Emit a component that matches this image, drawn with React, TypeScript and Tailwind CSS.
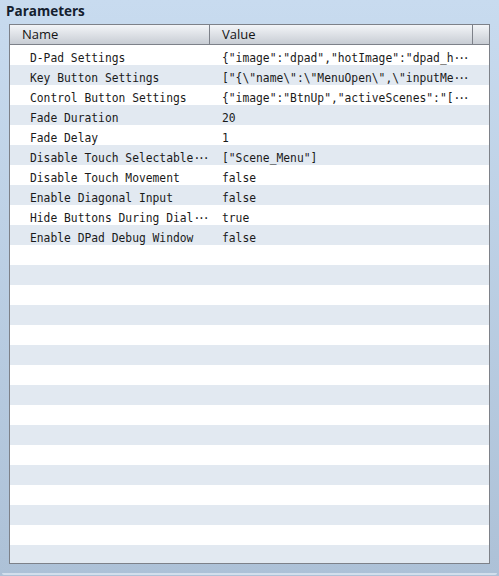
import React from "react";

type Param = { name: string; value: string; cut?: boolean; cutValue?: boolean };

const params: Param[] = [
  { name: "D-Pad Settings", value: '{"image":"dpad","hotImage":"dpad_h', cutValue: true },
  { name: "Key Button Settings", value: '["{\\"name\\":\\"MenuOpen\\",\\"inputMe', cutValue: true },
  { name: "Control Button Settings", value: '{"image":"BtnUp","activeScenes":"[', cutValue: true },
  { name: "Fade Duration", value: "20" },
  { name: "Fade Delay", value: "1" },
  { name: "Disable Touch Selectable", value: '["Scene_Menu"]', cut: true },
  { name: "Disable Touch Movement", value: "false" },
  { name: "Enable Diagonal Input", value: "false" },
  { name: "Hide Buttons During Dial", value: "true", cut: true },
  { name: "Enable DPad Debug Window", value: "false" },
];

const TOTAL_ROWS = 26;

// narrow monospace look: DejaVu Sans Mono squeezed horizontally
const Mono = ({ text, cut }: { text: string; cut?: boolean }) => (
  <span className="inline-block origin-left scale-x-[0.87] font-['DejaVu_Sans_Mono',monospace] text-[13px]">
    {text}
    {cut && <span className="tracking-[-2.5px]">···</span>}
  </span>
);

const App = () => {
  const rows = Array.from({ length: TOTAL_ROWS }, (_, i) => params[i] ?? null);

  return (
    <div className="w-[499px] h-[576px] bg-gradient-to-b from-[#c8dbef] to-[#adc1d7] flex flex-col overflow-hidden">
      <div className="h-[24px] pl-[6px] pt-[3px] font-['Open_Sans',sans-serif] font-bold text-[13.5px] leading-[16px] text-[#14202e]">
        Parameters
      </div>

      <div className="ml-[9px] w-[481px] h-[540px] border border-[#7d8189] bg-white overflow-hidden flex flex-col">
        {/* header */}
        <div className="flex h-[20px] shrink-0 border-b border-[#7d8189] bg-gradient-to-b from-[#f3f5f8] to-[#c8cdd4] font-['Open_Sans',sans-serif] text-[13px] leading-[19px] text-[#141414]">
          <div className="w-[200px] border-r border-[#7d8189] pl-[12px]">Name</div>
          <div className="w-[263px] border-r border-[#7d8189] pl-[12px]">Value</div>
          <div className="flex-1" />
        </div>

        {/* rows */}
        <div className="flex flex-col">
          {rows.map((p, i) => (
            <div
              key={i}
              className={`flex h-[20px] shrink-0 pt-[1px] leading-[20px] text-[#1a1a1a] whitespace-nowrap overflow-hidden ${
                i % 2 === 0 ? "bg-white" : "bg-[#e2e9f1]"
              }`}
            >
              <div className="w-[200px] pl-[20px] overflow-hidden">
                {p && <Mono text={p.name} cut={p.cut} />}
              </div>
              <div className="flex-1 pl-[12px] overflow-hidden">
                {p && <Mono text={p.value} cut={p.cutValue} />}
              </div>
            </div>
          ))}
        </div>
      </div>

      <div className="mt-[9px] mx-[2px] h-[2px] rounded-b bg-[#d3dfec]" />
    </div>
  );
};

export default App;
